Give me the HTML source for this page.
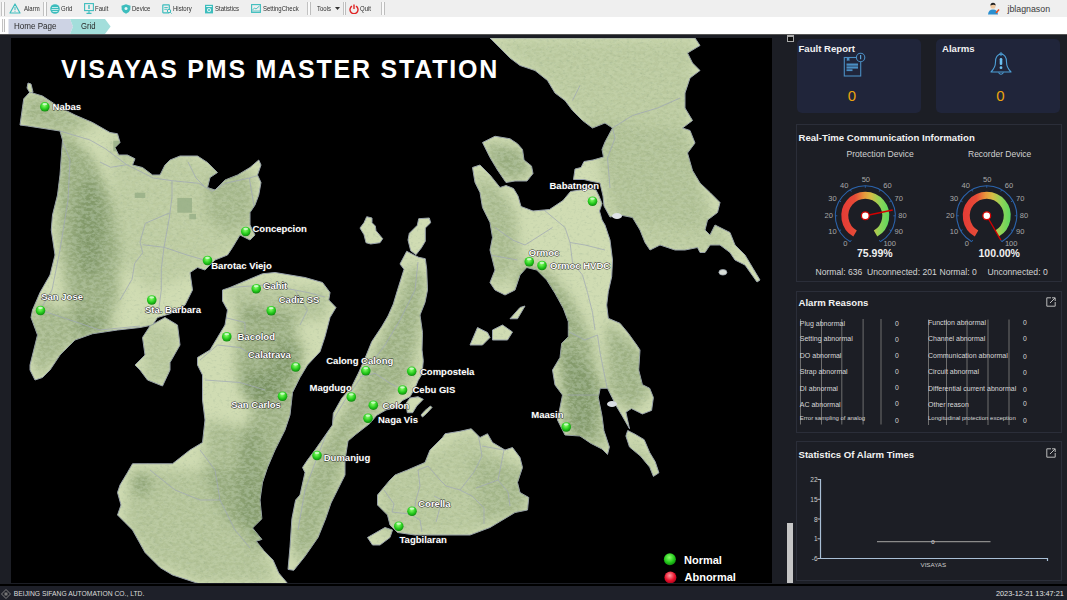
<!DOCTYPE html>
<html><head><meta charset="utf-8">
<style>
*{margin:0;padding:0;box-sizing:border-box}
html,body{width:1067px;height:600px;overflow:hidden;background:#1c1e25;font-family:"Liberation Sans",sans-serif}
.a{position:absolute}
#tb{left:0;top:0;width:1067px;height:17px;background:#efefef}
#bc{left:0;top:17px;width:1067px;height:17px;background:#fff}
.grip{position:absolute;width:3.5px;border-left:1px solid #c2c2c2;border-right:1px solid #bdbdbd;background:#fafafa}
.ti{position:absolute;top:5px;font-size:6.9px;color:#2e2e2e;line-height:8px;white-space:nowrap;transform:scaleX(.87);transform-origin:0 0}
.ic{position:absolute}
#main{left:0;top:34px;width:1067px;height:550px;background:#1c1e25;border-top:1px solid #555}
#map{left:11px;top:38px;width:761px;height:545px;background:#000;overflow:hidden}
#foot{left:0;top:586px;width:1067px;height:14px;background:#1e2029}
.lbl{font:bold 9.5px "Liberation Sans",sans-serif;fill:#fff;stroke:#202020;stroke-width:.9px;paint-order:stroke;stroke-linejoin:round}
.card{position:absolute;background:#20253a;border-radius:5px}
.ct{position:absolute;font-weight:bold;font-size:9.6px;color:#f2f2f2;white-space:nowrap}
.box{position:absolute;border:1px solid #2b2e39}
.gl{font:7.5px "Liberation Sans",sans-serif;fill:#a9a9a9;text-anchor:middle}
.rt{position:absolute;font-size:7.2px;color:#d4d4d4;white-space:nowrap;line-height:8px}
.vl{position:absolute;width:1px;background:#6a6a6a}
</style></head><body>
<div id="tb" class="a">
  <div class="grip" style="left:1px;top:2px;height:14px"></div>
  <svg class="ic" style="left:9px;top:3px" width="12" height="11" viewBox="0 0 12 11"><path d="M6 1 L11 10 L1 10 Z" fill="none" stroke="#3dbdbd" stroke-width="1.2" stroke-linejoin="round"/><line x1="6" y1="4" x2="6" y2="7.2" stroke="#3dbdbd" stroke-width="1"/><circle cx="6" cy="8.5" r=".5" fill="#3dbdbd"/></svg>
  <div class="ti" style="left:24px">Alarm</div>
  <div class="grip" style="left:43px;top:2px;height:14px"></div>
  <svg class="ic" style="left:50px;top:4px" width="10" height="10" viewBox="0 0 10 10"><circle cx="5" cy="5" r="4.8" fill="#3dbdbd"/><path d="M2 3.5h6M1.5 5.5h7M2.5 7.5h5" stroke="#e8f8f8" stroke-width=".8"/></svg>
  <div class="ti" style="left:61px">Grid</div>
  <svg class="ic" style="left:84px;top:3px" width="10" height="11" viewBox="0 0 10 11"><rect x=".6" y=".6" width="8.8" height="7" fill="none" stroke="#3dbdbd" stroke-width="1.1"/><rect x="4.3" y="2" width="1.4" height="4" fill="#3dbdbd"/><path d="M5 8v2M2.5 10.4h5" stroke="#3dbdbd" stroke-width="1.1"/></svg>
  <div class="ti" style="left:95px">Fault</div>
  <svg class="ic" style="left:121px;top:3.5px" width="10" height="10" viewBox="0 0 10 10"><path d="M5 .3 L9.5 1.8 L9.3 5.5 Q8.5 8.5 5 9.8 Q1.5 8.5 .7 5.5 L.5 1.8 Z" fill="#3dbdbd"/><circle cx="5" cy="4.6" r="1.5" fill="#e8f8f8"/></svg>
  <div class="ti" style="left:132px">Device</div>
  <svg class="ic" style="left:162px;top:3.5px" width="10" height="10" viewBox="0 0 10 10"><rect x=".8" y=".8" width="6.5" height="8" rx=".5" fill="none" stroke="#3dbdbd" stroke-width="1.2"/><path d="M2.3 3.5h3.5M2.3 5.3h3" stroke="#3dbdbd" stroke-width=".9"/><circle cx="7" cy="7" r="1.7" fill="#efefef" stroke="#3dbdbd" stroke-width="1"/><path d="M8.2 8.2 9.6 9.6" stroke="#3dbdbd" stroke-width="1"/></svg>
  <div class="ti" style="left:173px">History</div>
  <svg class="ic" style="left:204px;top:3.5px" width="10" height="10" viewBox="0 0 10 10"><rect x="1" y=".8" width="8" height="8.6" fill="#3dbdbd"/><rect x="2.2" y="2" width="5.6" height="1" fill="#e8f8f8"/><circle cx="5" cy="6" r="2" fill="#e8f8f8"/><circle cx="5" cy="6" r="1" fill="#3dbdbd"/></svg>
  <div class="ti" style="left:215px">Statistics</div>
  <svg class="ic" style="left:251px;top:4px" width="10" height="9" viewBox="0 0 10 9"><rect x=".6" y=".6" width="8.8" height="7.8" fill="none" stroke="#3dbdbd" stroke-width="1.1"/><path d="M1.5 6 L3.5 4 L5 5 L8.5 2" fill="none" stroke="#3dbdbd" stroke-width=".9"/><path d="M1 7h8" stroke="#3dbdbd" stroke-width=".8"/></svg>
  <div class="ti" style="left:262.5px">SettingCheck</div>
  <div class="grip" style="left:307px;top:2px;height:13px"></div>
  <div class="ti" style="left:317px">Tools</div>
  <svg class="ic" style="left:335px;top:7px" width="5" height="3" viewBox="0 0 5 3"><path d="M0 0h5L2.5 3z" fill="#333"/></svg>
  <div class="grip" style="left:342.5px;top:2px;height:13px"></div>
  <svg class="ic" style="left:349px;top:3.5px" width="10" height="10" viewBox="0 0 10 10"><path d="M3 2.2 A4 4 0 1 0 7 2.2" fill="none" stroke="#e02424" stroke-width="1.4"/><path d="M5 .5v4.5" stroke="#e02424" stroke-width="1.4"/></svg>
  <div class="ti" style="left:360px">Quit</div>
  <div class="grip" style="left:381px;top:2px;height:13px"></div>
  <svg class="ic" style="left:987px;top:2px" width="13" height="13" viewBox="0 0 13 13"><circle cx="6" cy="4" r="2.6" fill="#f1c9a0"/><path d="M3.4 3.5 Q3.5 .8 6 .8 Q8.6 .8 8.6 3.5 Q7 2.2 3.4 3.5Z" fill="#222"/><path d="M1 12.5 Q1.5 7.5 6 7.5 Q10.5 7.5 11 12.5Z" fill="#2a8fd0"/><path d="M9 11 L12 7.5" stroke="#e8501e" stroke-width="1.6"/></svg>
  <div class="ti" style="left:1007.5px;top:3.5px;font-size:8.8px;line-height:10px;color:#3a3a3a;transform:none">jblagnason</div>
</div>
<div id="bc" class="a">
  <div class="grip" style="left:1.5px;top:2px;height:13px"></div>
  <svg class="a" style="left:8px;top:1.5px" width="104" height="15" viewBox="0 0 104 15"><path d="M0.5 0 H62 L65 7.5 L62 15 H0.5Z" fill="#cdd3e4"/><path d="M62 0 H97 L102.6 7.5 L97 15 H62 L65 7.5Z" fill="#a3dedb"/></svg>
  <div class="ti" style="left:13.5px;top:4px;font-size:9.4px;line-height:10px;color:#2a2a2a;transform:scaleX(.86)">Home Page</div>
  <div class="ti" style="left:80.5px;top:4px;font-size:9.2px;line-height:10px;color:#2a2a2a;transform:scaleX(.84)">Grid</div>
</div>
<div id="main" class="a"></div>
<div id="map" class="a">
<svg width="761" height="545" viewBox="11 38 761 545" style="position:absolute;left:0;top:0">
<defs>
<radialGradient id="gball" cx=".45" cy=".35" r=".7"><stop offset="0" stop-color="#8aff6a"/><stop offset=".6" stop-color="#22c81a"/><stop offset="1" stop-color="#0c7a0c"/></radialGradient>
<radialGradient id="rball" cx=".45" cy=".35" r=".7"><stop offset="0" stop-color="#ff9aa0"/><stop offset=".6" stop-color="#e8102a"/><stop offset="1" stop-color="#a0001a"/></radialGradient>
</defs>
<clipPath id="landclip">
<polygon points="23.75,98.75 30,92 35,93.75 42.5,96 60,107.5 75,115 92.5,122.5 110,132.5 117.5,133.75 120,142.5 115,147.5 118.75,155 127.5,155 135,158.75 132.5,165 142.5,167.5 152.5,175 160,175 165,165 170,160 180,156 197.5,156 207.5,162.5 217.5,172.5 210,177.5 207.5,187.5 215,190 225,180 237.5,175 250,167.5 258.75,160 261,165 257.5,175 261,182.5 258.75,195 255,205 250,212.5 250,225 255,235 250,240 240,235 232.5,247.5 227.5,255 215,260 205,270 197.5,267.5 190,272.5 192.5,290 185,305 170,313.75 157.5,317.5 152.5,325 140,327.5 117.5,330 92.5,333.75 75,340 60,355 50,370 42.5,377.5 35,380 30,370 30,365 37.5,335 31,317.5 32.5,310 40,292.5 50,275 55,255 51.25,230 52.5,215 57.5,195 60,175 62.5,140 60,131 27.5,126 20,125"/>
<polygon points="222.5,290 230,287.5 247.5,280 262.5,273.75 275,272.5 290,275 305,277.5 322.5,282.5 330,292.5 328.75,300 336,307.5 330,317.5 325,336.7 320,351.7 307.5,365 300,377.5 292.5,392.5 290,415 285,430 275,450 267.5,467.5 262.5,482.5 260,500 261.9,518.75 252.5,528 261.9,539.4 256.25,541.25 263.75,550.6 273,560 278.75,573 288,584 200,584 172.5,575 160,567.5 145,552.5 132.5,530 125,522.5 117.5,515 121,505 117.5,492.5 120,485 127.5,472.5 132.5,463.75 172.5,463.75 190,450 202.5,442.5 205,420 202.5,400 202.5,375 197.5,365 197.5,357.5 210,350 217.5,337.5 225,325 227.5,310 222.5,301"/>
<polygon points="150,326 165,317.5 177.5,325 180,345 170,362.5 170,370 162.5,386 147.5,380 140,370 135,365 145,355 142.5,337.5"/>
<polygon points="406.7,251.3 413.3,254.7 418.7,257.3 425.3,258.7 426.7,269.3 427.5,290 425,302.5 420,315 422.5,332.5 422,350 423.3,360.7 422,374 418,380.7 415.3,387.3 410,396.7 402,400.7 396.7,407.3 386,410 376.7,415.3 370,423.3 355,435 348,441 345,460 345,475 335,495 331,503 325.6,518.75 318,537.5 305,556.25 293.75,570.3 288,569.4 290,546.9 291.9,518.75 295.6,500 300,495 305,472.5 302.5,467.5 307.5,460 315,450 332.5,425 333.3,413.3 341.7,398.3 351.7,386.7 358.3,373.3 365,358.3 371.7,341.7 381.7,326.7 388,316 393.3,304 397.3,290.7 404,269.3 400,264"/>
<polygon points="490,38 695,38 700,45.5 687.5,53 692.5,63 700,70.5 690,78 685,93 685,108 692.5,120.5 682.5,128 690,130.5 695,143 687.5,153 692.5,170.5 700,183 710,192.5 720,202.5 717.5,212.5 707.5,220 705,230 710,235 715,225 730,232.5 735,245 745,255 760,280 757,282 745,265 735,260 730,252.5 720,245 710,245 705,252.5 700,252.5 697.5,247.5 685,250 675,250 660,245 650,250 645,242.5 640,230 632.5,217.5 620,215 610,217 604,206 603,196 600,183 590,181 584,179.5 573.5,179.5 575,169 581,167.5 584,161.5 593,160 603.5,157 602,149.5 605,142 612.5,128 605,123 592.5,128 582.5,120.5 572.5,110.5 565,100.5 555,93 547.5,80.5 535,70.5 520,65.5 510,58 500,48"/>
<polygon points="599,196 602,203.5 599.5,211 602,220 605,225 610,240 612.5,260 611.7,276.7 608.3,291.7 606.7,305 608.3,318.3 620,323.3 628.3,333.3 636.7,345 640,350 638.7,370 642.4,384.7 649.7,388.3 653.4,397.5 651.6,410.4 642.4,414 631.4,408.5 625.9,412.2 629.5,428.7 622.2,415.9 616.7,406.7 607.5,388.3 600.2,388.3 598.3,397.5 602,415.9 603.9,430.5 609.4,447 607.5,454.4 602,449 591,443.4 580,436 565,435 557.5,420 562.5,395 555,385 552.5,370 560,357.5 561.7,343.3 568.3,336.7 568.3,321.7 563.3,308.3 555,293.3 546.7,280 536.7,270 526.7,267.5 520,275 515,290 505,295 495,290 490,282.5 495,270 490,250 492.5,237.5 490,222.5 482.5,207.5 480,192.5 475,182.5 472.5,167.5 480,165 490,175 500,187.5 506,185.5 513.5,188.5 518,196 521,206.5 533,211 549.5,209.5 563,200.5 570.5,191.5 580,190 590,188.5 596,190"/>
<polygon points="482.5,142.5 495,136.25 510,138.75 517.5,143.75 522.5,149.5 524,160 531.5,166 533,173.5 527,181 515,181 506,182.5 497.5,170 490,157.5"/>
<polygon points="445,433.75 460,431.25 471.25,428.75 480,437.5 487.5,433.75 492.5,442.5 505,450 512.5,447.5 520,457.5 522.5,467.5 517.5,482.5 520,492.5 528.75,497.5 527.5,510 515,512.5 490,527.5 470,535 440,535 415,535 397.5,532.5 390,525 387.5,515 377.5,505 377.5,495 390,480 395,475 407.5,470 425,462.5 430,450 435,445 442.5,437.5"/>
<polygon points="367.5,537.5 385,527.5 392.5,530 390,537.5 380,545 372.5,545"/>
<polygon points="406,403.3 410,398 418,396.7 423.3,399.3 416.7,406 412.7,412.7 407.3,412.7"/>
<polygon points="470,345 477.5,327.5 487.5,332.5 490,337.5 482.5,345"/>
<polygon points="492.5,330 502.5,325 512.5,332 507.5,340 492.5,340"/>
<polygon points="510,318.75 520,307.5 525,306 517.5,318.75"/>
<polygon points="418.7,218.7 429.3,218 430.7,222.7 425.3,228 425.3,241.3 421.3,248 416,254.7 410.7,250.7 408,240 409.3,233.3 417.3,225.3"/>
<polygon points="366.7,216.7 372,218 372,222.7 375.3,226 376,230.7 382.7,238.7 380,242.7 370.7,244 366,242.7 364,234.7 360,228 364,222.7"/>
<polygon points="28,83 31,84 33,92 30,93 27,88"/>
<polygon points="627.7,430.5 635,434.2 644.2,439.7 649.7,452.6 655.2,461.7 658.9,472.8 653.4,476.4 649.7,467.2 640.6,456.2 629.5,447 625.9,436"/>
<polygon points="421,415 425,410.5 430.5,406 432,407.5 426.5,413.5 422.5,417"/>
</clipPath>
<filter id="blur6" x="-20%" y="-20%" width="140%" height="140%"><feGaussianBlur stdDeviation="6"/></filter>
<filter id="tex" x="0" y="0" width="100%" height="100%"><feTurbulence type="fractalNoise" baseFrequency=".3 .45" numOctaves="3" seed="3"/><feColorMatrix type="matrix" values="0 0 0 0 .45  0 0 0 0 .55  0 0 0 0 .36  1.6 0 0 0 -.85"/></filter>
<filter id="tex2" x="0" y="0" width="100%" height="100%"><feTurbulence type="fractalNoise" baseFrequency=".22 .35" numOctaves="3" seed="7"/><feColorMatrix type="matrix" values="0 0 0 0 .26  0 0 0 0 .36  0 0 0 0 .2  3.8 0 0 0 -1.4"/></filter>
<g fill="#d0dcb3" stroke="#9aa3ac" stroke-width="1">
<polygon points="23.75,98.75 30,92 35,93.75 42.5,96 60,107.5 75,115 92.5,122.5 110,132.5 117.5,133.75 120,142.5 115,147.5 118.75,155 127.5,155 135,158.75 132.5,165 142.5,167.5 152.5,175 160,175 165,165 170,160 180,156 197.5,156 207.5,162.5 217.5,172.5 210,177.5 207.5,187.5 215,190 225,180 237.5,175 250,167.5 258.75,160 261,165 257.5,175 261,182.5 258.75,195 255,205 250,212.5 250,225 255,235 250,240 240,235 232.5,247.5 227.5,255 215,260 205,270 197.5,267.5 190,272.5 192.5,290 185,305 170,313.75 157.5,317.5 152.5,325 140,327.5 117.5,330 92.5,333.75 75,340 60,355 50,370 42.5,377.5 35,380 30,370 30,365 37.5,335 31,317.5 32.5,310 40,292.5 50,275 55,255 51.25,230 52.5,215 57.5,195 60,175 62.5,140 60,131 27.5,126 20,125"/>
<polygon points="222.5,290 230,287.5 247.5,280 262.5,273.75 275,272.5 290,275 305,277.5 322.5,282.5 330,292.5 328.75,300 336,307.5 330,317.5 325,336.7 320,351.7 307.5,365 300,377.5 292.5,392.5 290,415 285,430 275,450 267.5,467.5 262.5,482.5 260,500 261.9,518.75 252.5,528 261.9,539.4 256.25,541.25 263.75,550.6 273,560 278.75,573 288,584 200,584 172.5,575 160,567.5 145,552.5 132.5,530 125,522.5 117.5,515 121,505 117.5,492.5 120,485 127.5,472.5 132.5,463.75 172.5,463.75 190,450 202.5,442.5 205,420 202.5,400 202.5,375 197.5,365 197.5,357.5 210,350 217.5,337.5 225,325 227.5,310 222.5,301"/>
<polygon points="150,326 165,317.5 177.5,325 180,345 170,362.5 170,370 162.5,386 147.5,380 140,370 135,365 145,355 142.5,337.5"/>
<polygon points="406.7,251.3 413.3,254.7 418.7,257.3 425.3,258.7 426.7,269.3 427.5,290 425,302.5 420,315 422.5,332.5 422,350 423.3,360.7 422,374 418,380.7 415.3,387.3 410,396.7 402,400.7 396.7,407.3 386,410 376.7,415.3 370,423.3 355,435 348,441 345,460 345,475 335,495 331,503 325.6,518.75 318,537.5 305,556.25 293.75,570.3 288,569.4 290,546.9 291.9,518.75 295.6,500 300,495 305,472.5 302.5,467.5 307.5,460 315,450 332.5,425 333.3,413.3 341.7,398.3 351.7,386.7 358.3,373.3 365,358.3 371.7,341.7 381.7,326.7 388,316 393.3,304 397.3,290.7 404,269.3 400,264"/>
<polygon points="490,38 695,38 700,45.5 687.5,53 692.5,63 700,70.5 690,78 685,93 685,108 692.5,120.5 682.5,128 690,130.5 695,143 687.5,153 692.5,170.5 700,183 710,192.5 720,202.5 717.5,212.5 707.5,220 705,230 710,235 715,225 730,232.5 735,245 745,255 760,280 757,282 745,265 735,260 730,252.5 720,245 710,245 705,252.5 700,252.5 697.5,247.5 685,250 675,250 660,245 650,250 645,242.5 640,230 632.5,217.5 620,215 610,217 604,206 603,196 600,183 590,181 584,179.5 573.5,179.5 575,169 581,167.5 584,161.5 593,160 603.5,157 602,149.5 605,142 612.5,128 605,123 592.5,128 582.5,120.5 572.5,110.5 565,100.5 555,93 547.5,80.5 535,70.5 520,65.5 510,58 500,48"/>
<polygon points="599,196 602,203.5 599.5,211 602,220 605,225 610,240 612.5,260 611.7,276.7 608.3,291.7 606.7,305 608.3,318.3 620,323.3 628.3,333.3 636.7,345 640,350 638.7,370 642.4,384.7 649.7,388.3 653.4,397.5 651.6,410.4 642.4,414 631.4,408.5 625.9,412.2 629.5,428.7 622.2,415.9 616.7,406.7 607.5,388.3 600.2,388.3 598.3,397.5 602,415.9 603.9,430.5 609.4,447 607.5,454.4 602,449 591,443.4 580,436 565,435 557.5,420 562.5,395 555,385 552.5,370 560,357.5 561.7,343.3 568.3,336.7 568.3,321.7 563.3,308.3 555,293.3 546.7,280 536.7,270 526.7,267.5 520,275 515,290 505,295 495,290 490,282.5 495,270 490,250 492.5,237.5 490,222.5 482.5,207.5 480,192.5 475,182.5 472.5,167.5 480,165 490,175 500,187.5 506,185.5 513.5,188.5 518,196 521,206.5 533,211 549.5,209.5 563,200.5 570.5,191.5 580,190 590,188.5 596,190"/>
<polygon points="482.5,142.5 495,136.25 510,138.75 517.5,143.75 522.5,149.5 524,160 531.5,166 533,173.5 527,181 515,181 506,182.5 497.5,170 490,157.5"/>
<polygon points="445,433.75 460,431.25 471.25,428.75 480,437.5 487.5,433.75 492.5,442.5 505,450 512.5,447.5 520,457.5 522.5,467.5 517.5,482.5 520,492.5 528.75,497.5 527.5,510 515,512.5 490,527.5 470,535 440,535 415,535 397.5,532.5 390,525 387.5,515 377.5,505 377.5,495 390,480 395,475 407.5,470 425,462.5 430,450 435,445 442.5,437.5"/>
<polygon points="367.5,537.5 385,527.5 392.5,530 390,537.5 380,545 372.5,545"/>
<polygon points="406,403.3 410,398 418,396.7 423.3,399.3 416.7,406 412.7,412.7 407.3,412.7"/>
<polygon points="470,345 477.5,327.5 487.5,332.5 490,337.5 482.5,345"/>
<polygon points="492.5,330 502.5,325 512.5,332 507.5,340 492.5,340"/>
<polygon points="510,318.75 520,307.5 525,306 517.5,318.75"/>
<polygon points="418.7,218.7 429.3,218 430.7,222.7 425.3,228 425.3,241.3 421.3,248 416,254.7 410.7,250.7 408,240 409.3,233.3 417.3,225.3"/>
<polygon points="366.7,216.7 372,218 372,222.7 375.3,226 376,230.7 382.7,238.7 380,242.7 370.7,244 366,242.7 364,234.7 360,228 364,222.7"/>
<polygon points="28,83 31,84 33,92 30,93 27,88"/>
<polygon points="627.7,430.5 635,434.2 644.2,439.7 649.7,452.6 655.2,461.7 658.9,472.8 653.4,476.4 649.7,467.2 640.6,456.2 629.5,447 625.9,436"/>
<polygon points="421,415 425,410.5 430.5,406 432,407.5 426.5,413.5 422.5,417"/>
</g>
<g clip-path="url(#landclip)">
<rect x="11" y="38" width="761" height="545" filter="url(#tex)"/>
<mask id="mtn" maskUnits="userSpaceOnUse" x="11" y="38" width="761" height="545">
<g filter="url(#blur6)" fill="#fff">
<path opacity=".55" d="M60,132 L76,140 L96,162 L112,200 L120,250 L118,300 L106,330 L82,336 L68,300 L60,250 L56,200 Z"/>
<ellipse opacity=".5" cx="90" cy="228" rx="15" ry="50"/>
<path opacity=".45" d="M20,98 L40,94 L70,112 L100,126 L64,132 L24,126 Z"/>
<path opacity=".2" d="M110,135 L200,160 L255,170 L258,240 L220,255 L190,275 L150,290 L118,260 Z"/>
<ellipse opacity=".3" cx="230" cy="200" rx="25" ry="32"/>
<path opacity=".45" d="M32,300 L70,310 L120,325 L80,342 L55,360 L38,378 L30,340 Z"/>
<path opacity=".3" d="M225,285 L330,290 L325,320 L240,320 Z"/>
<path opacity=".55" d="M240,305 L295,315 L300,360 L280,400 L250,405 L235,370 Z"/>
<ellipse opacity=".6" cx="256" cy="386" rx="16" ry="14"/>
<path opacity=".5" d="M280,340 L305,345 L296,400 L282,460 L272,530 L258,552 L242,525 L238,455 L255,400 Z"/>
<path opacity=".4" d="M205,420 L260,430 L272,520 L230,526 L205,480 Z"/>
<ellipse opacity=".55" cx="142" cy="484" rx="9" ry="11"/>
<path opacity=".3" d="M130,470 L240,470 L262,540 L275,582 L200,582 L150,560 L125,520 Z"/>
<path opacity=".25" d="M142,320 L180,330 L175,380 L145,385 Z"/>
<path opacity=".5" d="M412,262 L426,280 L420,330 L410,380 L380,410 L350,440 L340,480 L320,540 L298,565 L292,540 L300,490 L320,450 L350,400 L375,350 L398,300 Z"/>
<path opacity=".55" d="M522,262 L548,270 L572,300 L592,340 L600,400 L590,440 L565,432 L560,380 L556,330 L538,300 L512,285 Z"/>
<path opacity=".4" d="M475,170 L500,190 L515,210 L520,260 L495,290 L485,230 Z"/>
<path opacity=".5" d="M606,320 L640,350 L650,395 L630,412 L608,392 Z"/>
<path opacity=".5" d="M560,340 L600,380 L606,450 L570,436 Z"/>
<path opacity=".45" d="M626,430 L659,476 L640,465 Z"/>
<path opacity=".55" d="M486,142 L520,148 L532,172 L510,182 L492,168 Z"/>
<path opacity=".22" d="M490,40 L695,40 L688,130 L700,190 L740,255 L650,250 L608,215 L598,160 L575,112 L540,75 Z"/>
<path opacity=".15" d="M590,120 L690,130 L710,200 L700,230 L620,220 Z"/>
<path opacity=".25" d="M380,480 L470,432 L525,470 L528,510 L470,535 L380,535 Z"/>
<path opacity=".25" d="M470,456 L527,470 L527,512 L480,520 Z"/>
</g>
</mask>
<g mask="url(#mtn)">
<rect x="11" y="38" width="761" height="545" fill="#5c7845" opacity=".85"/>
<rect x="11" y="38" width="761" height="545" filter="url(#tex2)"/>
</g>

<g fill="none" stroke="#a2a9b4" stroke-width=".9" stroke-linejoin="round" opacity=".85">
<path d="M105.3,148.7 L126.7,164.7 L153.3,178 L172,180.7 L198.7,183.3 L212,191.3 L225.3,183.3 L249.3,178 L260,175"/>
<path d="M172,180.7 L172,196.7 L169.3,218 L164,247.3 L161.3,268.7 L161.3,290 L158,315"/>
<path d="M169.3,213 L145.3,223.3 L140,242 L142.7,252.7 L134.7,263.3 L132,279.3 L120,300"/>
<path d="M142.7,244.7 L164,247.3 L188,255.3 L206.7,260.7"/>
<path d="M249.3,178 L254.7,210 L250,226"/>
<path d="M188,162 L196,178 L204,186"/>
<path d="M100,162 L110.7,167.3 L126.7,164.7"/>
<path d="M62,140 L70,160 L68,200 L60,250 L52,290 L40,310"/>
<path d="M60,131 L90,140 L105.3,148.7"/>
<path d="M40,310 L70,320 L100,330 L140,326"/>
<path d="M428,466 L440,480 L446,486 L460,490 L472,496 L484,508 L484,524"/>
<path d="M460,490 L474,472 L482,456 L480,444 L478,434"/>
<path d="M482,446 L504,450 L500,470 L498,480 L476,488"/>
<path d="M498,480 L508,492 L510,506"/>
<path d="M428,466 L418,470 L420,486 L416,500 L414,512"/>
<path d="M384,490 L394,504 L392,512 L410,514 L420,520 L422,532"/>
<path d="M434,496 L442,500 L436,522"/>
<path d="M225,317.5 L245,322.5 L245,335"/>
<path d="M200,360 L217.5,345 L240,347.5 L252.5,355"/>
<path d="M205,380 L240,382.5 L265,390"/>
<path d="M230,287.5 L265,285 L295,290 L307.5,292.5 L325,297"/>
<path d="M295,290 L307.5,310 L300,325"/>
<path d="M200,450 L215,470 L220,500 L235,530 L250,548"/>
<path d="M150,470 L175,490 L200,500 L220,500"/>
<path d="M542.5,208.75 L565,227.5 L570,242.5 L585,245 L605,250"/>
<path d="M570,242.5 L572.5,262.5 L582.5,275 L587.5,292.5 L592.5,312.5 L595,330"/>
<path d="M495,227.5 L512.5,240 L525,245 L552.5,227.5"/>
<path d="M490,255 L517.5,260"/>
<path d="M570,332.5 L585,340 L597.5,335 L600,352.5 L605,377.5 L607.5,390"/>
<path d="M567.5,395 L597.5,395"/>
<path d="M612.5,128 L632.5,115.5 L657.5,108 L680,98"/>
<path d="M612.5,128 L615,138 L607.5,158 L610,188"/>
<path d="M580,85.5 L572.5,100.5"/>
<path d="M360,376.7 L375,373.3 L390,383.3 L396.7,386.7"/>
<path d="M418,262 L415,290 L400,320 L385,345 L365,372 L345,400 L330,425 L318,455 L305,490 L298,530"/>
</g>
<g fill="#96ae86" opacity=".8">
<rect x="177.3" y="198" width="14.7" height="14.7"/>
<rect x="113.3" y="140.7" width="8" height="10.6"/>
<rect x="134.7" y="192.7" width="10.6" height="5.3"/>
<rect x="189.3" y="214" width="6.7" height="5.3"/>
</g>

</g>
<ellipse cx="722.9" cy="272.3" rx="4" ry="2.8" fill="#d9ded8" stroke="#9aa3ac" stroke-width=".8"/>
<ellipse cx="612" cy="404" rx="5" ry="3" fill="#d8dde2"/>
<ellipse cx="617" cy="216" rx="5" ry="3" fill="#dfe3e6"/>
<text x="61" y="78.2" style="font:bold 25px 'Liberation Sans',sans-serif;fill:#fff;letter-spacing:1.78px">VISAYAS PMS MASTER STATION</text>
<circle cx="44.8" cy="106.8" r="4.8" fill="url(#gball)"/>
<ellipse cx="44.8" cy="104.2" rx="2.4" ry="1.1" fill="#e8ffe8" opacity=".75"/>
<text x="52.6" y="109.6" class="lbl">Nabas</text>
<circle cx="245.75" cy="231.5" r="4.8" fill="url(#gball)"/>
<ellipse cx="245.75" cy="228.9" rx="2.4" ry="1.1" fill="#e8ffe8" opacity=".75"/>
<text x="252.5" y="232" class="lbl">Concepcion</text>
<circle cx="207.5" cy="260.5" r="4.8" fill="url(#gball)"/>
<ellipse cx="207.5" cy="257.9" rx="2.4" ry="1.1" fill="#e8ffe8" opacity=".75"/>
<text x="211.25" y="269.25" class="lbl">Barotac Viejo</text>
<circle cx="40.5" cy="310.5" r="4.8" fill="url(#gball)"/>
<ellipse cx="40.5" cy="307.9" rx="2.4" ry="1.1" fill="#e8ffe8" opacity=".75"/>
<text x="41.25" y="299.5" class="lbl">San Jose</text>
<circle cx="151.75" cy="300" r="4.8" fill="url(#gball)"/>
<ellipse cx="151.75" cy="297.4" rx="2.4" ry="1.1" fill="#e8ffe8" opacity=".75"/>
<text x="145" y="312.5" class="lbl">Sta. Barbara</text>
<circle cx="256.25" cy="288.75" r="4.8" fill="url(#gball)"/>
<ellipse cx="256.25" cy="286.15" rx="2.4" ry="1.1" fill="#e8ffe8" opacity=".75"/>
<text x="263" y="288.75" class="lbl">Gahit</text>
<circle cx="271.25" cy="310.75" r="4.8" fill="url(#gball)"/>
<ellipse cx="271.25" cy="308.15" rx="2.4" ry="1.1" fill="#e8ffe8" opacity=".75"/>
<text x="278.75" y="303" class="lbl">Cadiz SS</text>
<circle cx="226.75" cy="336.75" r="4.8" fill="url(#gball)"/>
<ellipse cx="226.75" cy="334.15" rx="2.4" ry="1.1" fill="#e8ffe8" opacity=".75"/>
<text x="237.5" y="340" class="lbl">Bacolod</text>
<circle cx="295.75" cy="367" r="4.8" fill="url(#gball)"/>
<ellipse cx="295.75" cy="364.4" rx="2.4" ry="1.1" fill="#e8ffe8" opacity=".75"/>
<text x="248" y="357.5" class="lbl">Calatrava</text>
<circle cx="282.5" cy="396.25" r="4.8" fill="url(#gball)"/>
<ellipse cx="282.5" cy="393.65" rx="2.4" ry="1.1" fill="#e8ffe8" opacity=".75"/>
<text x="231.25" y="408" class="lbl">San Carlos</text>
<circle cx="365.8" cy="370.8" r="4.8" fill="url(#gball)"/>
<ellipse cx="365.8" cy="368.2" rx="2.4" ry="1.1" fill="#e8ffe8" opacity=".75"/>
<text x="326.25" y="363.5" class="lbl">Calong Calong</text>
<circle cx="351.3" cy="397" r="4.8" fill="url(#gball)"/>
<ellipse cx="351.3" cy="394.4" rx="2.4" ry="1.1" fill="#e8ffe8" opacity=".75"/>
<text x="309.5" y="391.25" class="lbl">Magdugo</text>
<circle cx="411.7" cy="371.3" r="4.8" fill="url(#gball)"/>
<ellipse cx="411.7" cy="368.7" rx="2.4" ry="1.1" fill="#e8ffe8" opacity=".75"/>
<text x="420" y="374.5" class="lbl">Compostela</text>
<circle cx="402.5" cy="390" r="4.8" fill="url(#gball)"/>
<ellipse cx="402.5" cy="387.4" rx="2.4" ry="1.1" fill="#e8ffe8" opacity=".75"/>
<text x="412.5" y="393" class="lbl">Cebu GIS</text>
<circle cx="373.3" cy="405.2" r="4.8" fill="url(#gball)"/>
<ellipse cx="373.3" cy="402.59999999999997" rx="2.4" ry="1.1" fill="#e8ffe8" opacity=".75"/>
<text x="382.5" y="408.75" class="lbl">Colon</text>
<circle cx="368" cy="418.25" r="4.8" fill="url(#gball)"/>
<ellipse cx="368" cy="415.65" rx="2.4" ry="1.1" fill="#e8ffe8" opacity=".75"/>
<text x="378" y="422.5" class="lbl">Naga Vis</text>
<circle cx="317" cy="455.5" r="4.8" fill="url(#gball)"/>
<ellipse cx="317" cy="452.9" rx="2.4" ry="1.1" fill="#e8ffe8" opacity=".75"/>
<text x="323.75" y="461.25" class="lbl">Dumanjug</text>
<circle cx="412" cy="511.25" r="4.8" fill="url(#gball)"/>
<ellipse cx="412" cy="508.65" rx="2.4" ry="1.1" fill="#e8ffe8" opacity=".75"/>
<text x="418.25" y="507" class="lbl">Corella</text>
<circle cx="398.75" cy="526.25" r="4.8" fill="url(#gball)"/>
<ellipse cx="398.75" cy="523.65" rx="2.4" ry="1.1" fill="#e8ffe8" opacity=".75"/>
<text x="399.5" y="542.5" class="lbl">Tagbilaran</text>
<circle cx="592.5" cy="201.25" r="4.8" fill="url(#gball)"/>
<ellipse cx="592.5" cy="198.65" rx="2.4" ry="1.1" fill="#e8ffe8" opacity=".75"/>
<text x="549.5" y="189.25" class="lbl">Babatngon</text>
<circle cx="529.25" cy="261.75" r="4.8" fill="url(#gball)"/>
<ellipse cx="529.25" cy="259.15" rx="2.4" ry="1.1" fill="#e8ffe8" opacity=".75"/>
<text x="528.75" y="255.5" class="lbl">Ormoc</text>
<circle cx="542" cy="265.5" r="4.8" fill="url(#gball)"/>
<ellipse cx="542" cy="262.9" rx="2.4" ry="1.1" fill="#e8ffe8" opacity=".75"/>
<text x="550" y="268.75" class="lbl">Ormoc HVDC</text>
<circle cx="566.25" cy="427" r="4.8" fill="url(#gball)"/>
<ellipse cx="566.25" cy="424.4" rx="2.4" ry="1.1" fill="#e8ffe8" opacity=".75"/>
<text x="531.25" y="418" class="lbl">Maasin</text>
<circle cx="669.9" cy="559.3" r="6" fill="url(#gball)"/>
<circle cx="670.4" cy="577.4" r="6" fill="url(#rball)"/>
<text x="684" y="563.5" style="font:bold 11px 'Liberation Sans',sans-serif;fill:#fff">Normal</text>
<text x="684.5" y="581" style="font:bold 11px 'Liberation Sans',sans-serif;fill:#fff">Abnormal</text>
</svg>
</div>
<!-- right panel -->
<svg class="a" style="left:786.5px;top:35px" width="7" height="7" viewBox="0 0 7 7"><rect x=".5" y=".5" width="6" height="6" fill="#111" stroke="#aaa" stroke-width="1"/><rect x=".5" y=".5" width="6" height="1.5" fill="#aaa"/></svg>
<div class="card" style="left:797px;top:39px;width:124px;height:74px"></div>
<div class="ct" style="left:798.5px;top:42.5px">Fault Report</div>
<svg class="a" style="left:843px;top:52px" width="24" height="25" viewBox="0 0 24 25"><rect x="1.3" y="5.5" width="16.4" height="18.5" fill="none" stroke="#4b8ec2" stroke-width="1.1"/><rect x="3.5" y="11.5" width="11.5" height="2.2" fill="#4b8ec2"/><rect x="3.5" y="14.4" width="11.5" height="2.2" fill="#4b8ec2"/><rect x="3.5" y="17.3" width="6" height="1.8" fill="#4b8ec2"/><path d="M3.8 6v3.3l1.3-1.1 1.3 1.1V6z" fill="#4b8ec2"/><circle cx="17.6" cy="5.5" r="4.2" fill="#20253a" stroke="#4b8ec2" stroke-width="1.1"/><path d="M17.6 3v4.2" stroke="#5aa2d6" stroke-width="1.2"/></svg>
<div class="a" style="left:846px;top:87px;width:12px;text-align:center;font-size:15px;color:#eba40e">0</div>
<div class="card" style="left:936px;top:39px;width:124px;height:74px"></div>
<div class="ct" style="left:942px;top:42.5px">Alarms</div>
<svg class="a" style="left:989px;top:52px" width="24" height="25" viewBox="0 0 24 25"><path d="M12 2 C7.5 2.5 6.5 6 6.5 10 C6.5 15 5 17 2 20 H22 C19 17 17.5 15 17.5 10 C17.5 6 16.5 2.5 12 2Z" fill="none" stroke="#4d9fd6" stroke-width="1.1" stroke-linejoin="round"/><circle cx="12" cy="2" r="1.2" fill="none" stroke="#4d9fd6" stroke-width="1"/><path d="M9.5 20.5 Q12 24 14.5 20.5" fill="none" stroke="#4d9fd6" stroke-width="1.1"/><rect x="10.7" y="6" width="2.6" height="7" rx="1.2" fill="#6cc0f0"/><circle cx="12" cy="15.7" r="1.4" fill="#6cc0f0"/></svg>
<div class="a" style="left:994.5px;top:87px;width:12px;text-align:center;font-size:15px;color:#eba40e">0</div>

<div class="box" style="left:796px;top:124px;width:266px;height:158px"></div>
<div class="ct" style="left:798.5px;top:132px">Real-Time Communication Information</div>
<div class="rt" style="left:846.5px;top:149px;font-size:8.6px;line-height:10px;color:#d2d2d2">Protection Device</div>
<div class="rt" style="left:968px;top:149px;font-size:8.5px;line-height:10px;color:#d2d2d2">Recorder Device</div>
<svg class="a" style="left:0;top:0" width="1067" height="600">
<path d="M850.30,241.78 A30,30 0 1 1 880.30,241.78" fill="none" stroke="#2b64ad" stroke-width="1.1"/>
<line x1="850.30" y1="241.78" x2="851.30" y2="240.05" stroke="#2b64ad" stroke-width=".9"/>
<line x1="839.32" y1="230.80" x2="841.05" y2="229.80" stroke="#2b64ad" stroke-width=".9"/>
<line x1="835.30" y1="215.80" x2="837.30" y2="215.80" stroke="#2b64ad" stroke-width=".9"/>
<line x1="839.32" y1="200.80" x2="841.05" y2="201.80" stroke="#2b64ad" stroke-width=".9"/>
<line x1="850.30" y1="189.82" x2="851.30" y2="191.55" stroke="#2b64ad" stroke-width=".9"/>
<line x1="865.30" y1="185.80" x2="865.30" y2="187.80" stroke="#2b64ad" stroke-width=".9"/>
<line x1="880.30" y1="189.82" x2="879.30" y2="191.55" stroke="#2b64ad" stroke-width=".9"/>
<line x1="891.28" y1="200.80" x2="889.55" y2="201.80" stroke="#2b64ad" stroke-width=".9"/>
<line x1="895.30" y1="215.80" x2="893.30" y2="215.80" stroke="#2b64ad" stroke-width=".9"/>
<line x1="891.28" y1="230.80" x2="889.55" y2="229.80" stroke="#2b64ad" stroke-width=".9"/>
<line x1="880.30" y1="241.78" x2="879.30" y2="240.05" stroke="#2b64ad" stroke-width=".9"/>
<linearGradient id="gg1" gradientUnits="userSpaceOnUse" x1="841.3" y1="0" x2="889.3" y2="0"><stop offset="0" stop-color="#e53b36"/><stop offset=".28" stop-color="#e64a37"/><stop offset=".48" stop-color="#e8983c"/><stop offset=".62" stop-color="#d6bd45"/><stop offset=".8" stop-color="#90d458"/><stop offset="1" stop-color="#5cd65e"/></linearGradient>
<path d="M855.05,233.55 A20.5,20.5 0 1 1 875.55,233.55" fill="none" stroke="url(#gg1)" stroke-width="7"/>
<text x="845.30" y="246.40" class="gl">0</text>
<text x="832.50" y="233.90" class="gl">10</text>
<text x="828.70" y="218.20" class="gl">20</text>
<text x="832.50" y="201.00" class="gl">30</text>
<text x="844.20" y="188.00" class="gl">40</text>
<text x="865.80" y="182.40" class="gl">50</text>
<text x="887.50" y="188.00" class="gl">60</text>
<text x="898.70" y="201.00" class="gl">70</text>
<text x="902.50" y="218.20" class="gl">80</text>
<text x="898.70" y="233.90" class="gl">90</text>
<text x="889.70" y="246.40" class="gl">100</text>
<line x1="865.3" y1="215.8" x2="892.69" y2="209.96" stroke="#d40000" stroke-width="1.4"/>
<circle cx="865.3" cy="215.8" r="3.9" fill="#fff" stroke="#d40000" stroke-width="1.3"/>
<path d="M971.75,241.73 A30,30 0 1 1 1001.75,241.73" fill="none" stroke="#2b64ad" stroke-width="1.1"/>
<line x1="971.75" y1="241.73" x2="972.75" y2="240.00" stroke="#2b64ad" stroke-width=".9"/>
<line x1="960.77" y1="230.75" x2="962.50" y2="229.75" stroke="#2b64ad" stroke-width=".9"/>
<line x1="956.75" y1="215.75" x2="958.75" y2="215.75" stroke="#2b64ad" stroke-width=".9"/>
<line x1="960.77" y1="200.75" x2="962.50" y2="201.75" stroke="#2b64ad" stroke-width=".9"/>
<line x1="971.75" y1="189.77" x2="972.75" y2="191.50" stroke="#2b64ad" stroke-width=".9"/>
<line x1="986.75" y1="185.75" x2="986.75" y2="187.75" stroke="#2b64ad" stroke-width=".9"/>
<line x1="1001.75" y1="189.77" x2="1000.75" y2="191.50" stroke="#2b64ad" stroke-width=".9"/>
<line x1="1012.73" y1="200.75" x2="1011.00" y2="201.75" stroke="#2b64ad" stroke-width=".9"/>
<line x1="1016.75" y1="215.75" x2="1014.75" y2="215.75" stroke="#2b64ad" stroke-width=".9"/>
<line x1="1012.73" y1="230.75" x2="1011.00" y2="229.75" stroke="#2b64ad" stroke-width=".9"/>
<line x1="1001.75" y1="241.73" x2="1000.75" y2="240.00" stroke="#2b64ad" stroke-width=".9"/>
<linearGradient id="gg2" gradientUnits="userSpaceOnUse" x1="962.75" y1="0" x2="1010.75" y2="0"><stop offset="0" stop-color="#e53b36"/><stop offset=".28" stop-color="#e64a37"/><stop offset=".48" stop-color="#e8983c"/><stop offset=".62" stop-color="#d6bd45"/><stop offset=".8" stop-color="#90d458"/><stop offset="1" stop-color="#5cd65e"/></linearGradient>
<path d="M976.50,233.50 A20.5,20.5 0 1 1 997.00,233.50" fill="none" stroke="url(#gg2)" stroke-width="7"/>
<text x="966.75" y="246.35" class="gl">0</text>
<text x="953.95" y="233.85" class="gl">10</text>
<text x="950.15" y="218.15" class="gl">20</text>
<text x="953.95" y="200.95" class="gl">30</text>
<text x="965.65" y="187.95" class="gl">40</text>
<text x="987.25" y="182.35" class="gl">50</text>
<text x="1008.95" y="187.95" class="gl">60</text>
<text x="1020.15" y="200.95" class="gl">70</text>
<text x="1023.95" y="218.15" class="gl">80</text>
<text x="1020.15" y="233.85" class="gl">90</text>
<text x="1011.15" y="246.35" class="gl">100</text>
<line x1="986.75" y1="215.75" x2="1000.75" y2="240.00" stroke="#d40000" stroke-width="1.4"/>
<circle cx="986.75" cy="215.75" r="3.9" fill="#fff" stroke="#d40000" stroke-width="1.3"/>
</svg>
<div class="a" style="left:857px;top:247px;font-weight:bold;font-size:10.5px;color:#f0f0f0">75.99%</div>
<div class="a" style="left:978.5px;top:247px;font-weight:bold;font-size:10.5px;color:#f0f0f0">100.00%</div>
<div class="rt" style="left:815.5px;top:267px;font-size:8.6px;line-height:10px">Normal: 636</div>
<div class="rt" style="left:867px;top:267px;font-size:8.6px;line-height:10px">Unconnected: 201</div>
<div class="rt" style="left:939.5px;top:267px;font-size:8.6px;line-height:10px">Normal: 0</div>
<div class="rt" style="left:987.5px;top:267px;font-size:8.6px;line-height:10px">Unconnected: 0</div>

<div class="box" style="left:796px;top:291px;width:266px;height:142px"></div>
<div class="ct" style="left:798.5px;top:296.5px">Alarm Reasons</div>
<svg class="a" style="left:1045.5px;top:297px" width="10" height="10" viewBox="0 0 10 10"><path d="M5 .8H.8v8.4h8.4V5" fill="none" stroke="#bbb" stroke-width="1"/><path d="M4 6 L9 1 M6 .8h3.2V4" fill="none" stroke="#bbb" stroke-width="1"/></svg>
<svg class="a" style="left:0;top:0" width="1067" height="600">
<line x1="800.5" y1="319" x2="800.5" y2="424.5" stroke="#6e6e6e" stroke-width="1"/>
<line x1="821.5" y1="319" x2="821.5" y2="424.5" stroke="#6e6e6e" stroke-width="1"/>
<line x1="841.8" y1="319" x2="841.8" y2="424.5" stroke="#6e6e6e" stroke-width="1"/>
<line x1="863.1" y1="319" x2="863.1" y2="424.5" stroke="#6e6e6e" stroke-width="1"/>
<line x1="881" y1="319" x2="881" y2="424.5" stroke="#6e6e6e" stroke-width="1"/>
<line x1="928.5" y1="319.5" x2="928.5" y2="425" stroke="#6e6e6e" stroke-width="1"/>
<line x1="946.5" y1="319.5" x2="946.5" y2="425" stroke="#6e6e6e" stroke-width="1"/>
<line x1="967" y1="319.5" x2="967" y2="425" stroke="#6e6e6e" stroke-width="1"/>
<line x1="988" y1="319.5" x2="988" y2="425" stroke="#6e6e6e" stroke-width="1"/>
<line x1="1009" y1="319.5" x2="1009" y2="425" stroke="#6e6e6e" stroke-width="1"/>
<g style="font:7px 'Liberation Sans',sans-serif;fill:#d8d8d8">
<text x="799.8" y="325.7" style="font-size:7px">Plug abnormal</text>
<text x="895" y="325.5" style="font-size:6.8px">0</text>
<text x="799.8" y="341.4" style="font-size:7px">Setting abnormal</text>
<text x="895" y="341.5" style="font-size:6.8px">0</text>
<text x="799.8" y="358.2" style="font-size:7px">DO abnormal</text>
<text x="895" y="357.8" style="font-size:6.8px">0</text>
<text x="799.8" y="374.3" style="font-size:7px">Strap abnormal</text>
<text x="895" y="374.2" style="font-size:6.8px">0</text>
<text x="799.8" y="390.8" style="font-size:7px">DI abnormal</text>
<text x="895" y="390" style="font-size:6.8px">0</text>
<text x="799.8" y="406.7" style="font-size:7px">AC abnormal</text>
<text x="895" y="406.4" style="font-size:6.8px">0</text>
<text x="799.8" y="419.7" style="font-size:6px">Error sampling of analog</text>
<text x="895" y="422.8" style="font-size:6.8px">0</text>
<text x="928" y="325" style="font-size:7px">Function abnormal</text>
<text x="1023" y="325.2" style="font-size:6.8px">0</text>
<text x="928" y="341.25" style="font-size:7px">Channel abnormal</text>
<text x="1023" y="341.3" style="font-size:6.8px">0</text>
<text x="928" y="358" style="font-size:7px">Communication abnormal</text>
<text x="1023" y="358.6" style="font-size:6.8px">0</text>
<text x="928" y="374.25" style="font-size:7px">Circuit abnormal</text>
<text x="1023" y="375" style="font-size:6.8px">0</text>
<text x="928" y="390.75" style="font-size:7px">Differential current abnormal</text>
<text x="1023" y="392" style="font-size:6.8px">0</text>
<text x="928" y="407" style="font-size:7px">Other reason</text>
<text x="1023" y="406.3" style="font-size:6.8px">0</text>
<text x="928" y="419.5" style="font-size:6px">Longitudinal protection exception</text>
<text x="1023" y="423" style="font-size:6.8px">0</text>
</g></svg>

<div class="box" style="left:796px;top:441px;width:266px;height:140px"></div>
<div class="ct" style="left:798.5px;top:449px">Statistics Of Alarm Times</div>
<svg class="a" style="left:1046px;top:448px" width="10" height="10" viewBox="0 0 10 10"><path d="M5 .8H.8v8.4h8.4V5" fill="none" stroke="#bbb" stroke-width="1"/><path d="M4 6 L9 1 M6 .8h3.2V4" fill="none" stroke="#bbb" stroke-width="1"/></svg>
<svg class="a" style="left:0;top:0" width="1067" height="600">
<path d="M820.5 479 V558.5 H1047.5 V561" fill="none" stroke="#a9bfd6" stroke-width="1.2"/>
<path d="M817.5 479.5h3M817.5 499.3h3M817.5 519h3M817.5 538.8h3M817.5 558.5h3" stroke="#a9bfd6" stroke-width="1"/>
<g style="font:6.5px 'Liberation Sans',sans-serif;fill:#d0d0d0;text-anchor:end">
<text x="817.5" y="482">22</text><text x="817.5" y="501.8">15</text><text x="817.5" y="521.5">8</text><text x="817.5" y="541.2">1</text><text x="817.5" y="561">-6</text>
</g>
<path d="M877 541.7H990.5" stroke="#8a8a8a" stroke-width="1.3"/>
<text x="933" y="544" style="font:6px 'Liberation Sans',sans-serif;fill:#ddd;text-anchor:middle">0</text>
<text x="933.3" y="566.8" style="font:6.2px 'Liberation Sans',sans-serif;fill:#cfcfcf;text-anchor:middle">VISAYAS</text>
</svg>
<div class="a" style="left:786.5px;top:523px;width:6px;height:60px;background:#c6c6c6"></div>

<div class="a" style="left:0;top:584px;width:1067px;height:2px;background:#000"></div>
<div id="foot" class="a">
  <svg class="a" style="left:1px;top:2.5px" width="10" height="10" viewBox="0 0 10 10"><path d="M5 .5 L9.5 5 L5 9.5 L.5 5Z" fill="none" stroke="#8a8a8a" stroke-width=".9"/><rect x="3.5" y="3.5" width="3" height="3" fill="#777"/></svg>
  <div class="a" style="left:13.8px;top:4.3px;font-size:6.75px;line-height:8px;color:#dcdcdc;white-space:nowrap">BEIJING SIFANG AUTOMATION CO., LTD.</div>
  <div class="a" style="left:996px;top:4.2px;font-size:7.3px;line-height:8px;color:#e4e4e4;white-space:nowrap">2023-12-21 13:47:21</div>
</div>
</body></html>
